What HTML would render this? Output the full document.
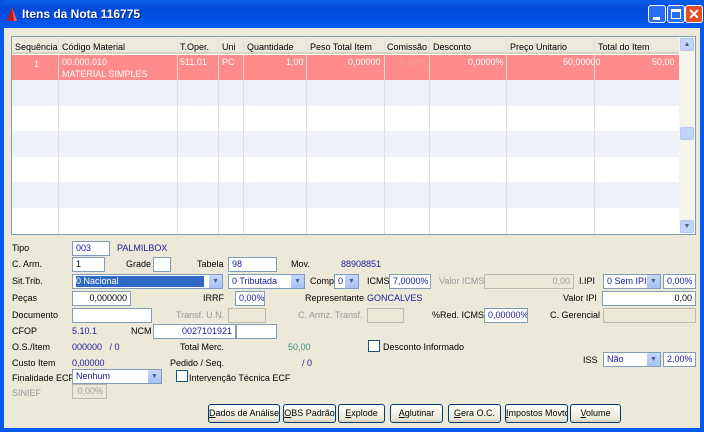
<!DOCTYPE html>
<html><head><meta charset="utf-8"><style>
*{margin:0;padding:0;box-sizing:border-box}
body{width:704px;height:432px;overflow:hidden;background:#0a53d8;font-family:"Liberation Sans",sans-serif;font-size:9px;color:#000}
#win{position:absolute;left:0;top:0;width:704px;height:432px;background:linear-gradient(#0a5fe8,#0048d8 10px,#0058ee 26px);border-radius:7px 7px 0 0}
#title{position:absolute;left:22px;top:7px;color:#fff;font-weight:bold;font-size:12px;text-shadow:1px 1px #0a2a80}
#body{position:absolute;left:4px;top:28px;width:696px;height:400px;background:#ece9d8}
.a{position:absolute;white-space:nowrap}
.in{position:absolute;height:15px;background:#fff;border:1px solid #7f9db9;padding:1px 3px;white-space:nowrap;overflow:hidden;font-size:9px;line-height:11px}
.dis{background:#ebe8d6;border-color:#bdbab0;color:#a0a0a0}
.r{text-align:right}
.bl{color:#1a1a9a}
.sel .ar{position:absolute;right:0;top:0;width:14px;height:13px;background:linear-gradient(#c6d6fb,#a9c1f6);border-left:1px solid #fff;color:#4d6185;font-size:7px;text-align:center;line-height:13px}
.btn{position:absolute;top:404px;height:19px;border:1px solid #003c74;border-radius:3px;background:linear-gradient(#fff,#ece9d8 80%,#d6d0c0);text-align:center;line-height:17px;font-size:9px;white-space:nowrap;overflow:hidden}
.cb{position:absolute;width:12px;height:12px;border:1px solid #1c5180;background:#fff}
.g{color:#999}
</style></head><body>
<div id="win">
<svg style="position:absolute;left:5px;top:6px" width="14" height="16"><path d="M2 15 L7 1 L12 15 Z" fill="#c8101a"/><path d="M7 1 L12 15 L9 15Z" fill="#f46060"/></svg>
<div id="title">Itens da Nota 116775</div>
<div style="position:absolute;left:648px;top:5px;width:18px;height:18px;border:1px solid #fff;border-radius:3px;background:#2a6ef0"><div style="position:absolute;left:4px;top:11px;width:7px;height:3px;background:#fff"></div></div>
<div style="position:absolute;left:667px;top:5px;width:18px;height:18px;border:1px solid #fff;border-radius:3px;background:#2a6ef0"><div style="position:absolute;left:3px;top:3px;width:10px;height:10px;border:1px solid #fff;border-top-width:3px"></div></div>
<div style="position:absolute;left:685px;top:5px;width:18px;height:18px;border:1px solid #fff;border-radius:3px;background:#e0502a;color:#fff;font-weight:bold;font-size:14px;text-align:center;line-height:16px">✕</div>
</div>
<div id="body"></div>
<div style="position:absolute;left:11px;top:36px;width:685px;height:199px;border:1px solid #7f9db9;background:#fff"></div>
<div style="position:absolute;left:12px;top:37px;width:667px;height:17px;background:#ebeadb;border-bottom:2px solid #d6d2c2"></div>
<div style="position:absolute;left:12px;top:55px;width:667px;height:25px;background:#ff8a8a"></div>
<div style="position:absolute;left:12px;top:80px;width:667px;height:26px;background:#eef1fa"></div>
<div style="position:absolute;left:12px;top:131px;width:667px;height:26px;background:#eef1fa"></div>
<div style="position:absolute;left:12px;top:182px;width:667px;height:26px;background:#eef1fa"></div>
<svg style="position:absolute;left:0;top:0" width="704" height="240"><g stroke="#e0dfd6">
<line x1="58.5" y1="38" x2="58.5" y2="234"/><line x1="177.5" y1="38" x2="177.5" y2="234"/><line x1="218.5" y1="38" x2="218.5" y2="234"/><line x1="243.5" y1="38" x2="243.5" y2="234"/><line x1="306.5" y1="38" x2="306.5" y2="234"/><line x1="384.5" y1="38" x2="384.5" y2="234"/><line x1="429.5" y1="38" x2="429.5" y2="234"/><line x1="506.5" y1="38" x2="506.5" y2="234"/><line x1="594.5" y1="38" x2="594.5" y2="234"/></g></svg>
<div class="a" style="left:15px;top:42px">Sequência</div><div class="a" style="left:62px;top:42px">Código Material</div><div class="a" style="left:180px;top:42px">T.Oper.</div><div class="a" style="left:222px;top:42px">Uni</div><div class="a" style="left:247px;top:42px">Quantidade</div><div class="a" style="left:310px;top:42px">Peso Total Item</div><div class="a" style="left:387px;top:42px">Comissão</div><div class="a" style="left:433px;top:42px">Desconto</div><div class="a" style="left:510px;top:42px">Preço Unitario</div><div class="a" style="left:598px;top:42px">Total do Item</div>
<div style="color:#fff">
<div class="a" style="left:34px;top:59px">1</div><div class="a" style="left:62px;top:57px">00.000.010</div><div class="a" style="left:62px;top:69px">MATERIAL SIMPLES</div><div class="a" style="left:180px;top:57px">511.01</div><div class="a" style="left:222px;top:57px">PC</div><div class="a" style="left:286px;top:57px">1,00</div><div class="a" style="left:348px;top:57px">0,00000</div><div class="a" style="left:400px;top:57px;color:#f0a0a0">0,00%</div><div class="a" style="left:468px;top:57px">0,0000%</div><div class="a" style="left:563px;top:57px">50,00000</div><div class="a" style="left:652px;top:57px">50,00</div></div>
<div style="position:absolute;left:679px;top:37px;width:16px;height:197px;background:#f5f4ef"></div>
<div style="position:absolute;left:680px;top:38px;width:14px;height:13px;background:#c1d3fb;border:1px solid #b4c8f2;border-radius:2px;color:#4d6185;font-size:7px;text-align:center;line-height:11px">▲</div>
<div style="position:absolute;left:680px;top:127px;width:14px;height:13px;background:#c1d3fb;border:1px solid #b4c8f2;border-radius:2px"></div>
<div style="position:absolute;left:680px;top:220px;width:14px;height:13px;background:#c1d3fb;border:1px solid #b4c8f2;border-radius:2px;color:#4d6185;font-size:7px;text-align:center;line-height:11px">▼</div>
<div class="a" style="left:12px;top:243px">Tipo</div><div class="in bl" style="left:72px;top:241px;width:38px">003</div><div class="a bl" style="left:117px;top:243px">PALMILBOX</div>
<div class="a" style="left:12px;top:259px">C. Arm.</div><div class="in" style="left:72px;top:257px;width:33px">1</div><div class="a" style="left:126px;top:259px">Grade</div><div class="in" style="left:153px;top:257px;width:18px"></div><div class="a" style="left:197px;top:259px">Tabela</div><div class="in bl" style="left:228px;top:257px;width:49px">98</div><div class="a" style="left:291px;top:259px">Mov.</div><div class="a bl" style="left:341px;top:259px">88908851</div>
<div class="a" style="left:12px;top:276px">Sit.Trib.</div>
<div class="in sel" style="left:72px;top:274px;width:151px"><span style="background:#316ac5;color:#fff;display:inline-block;width:128px">0 Nacional</span><div class="ar">▼</div></div>
<div class="in sel bl" style="left:228px;top:274px;width:77px">0 Tributada<div class="ar">▼</div></div>
<div class="a" style="left:310px;top:276px">Compl</div><div class="in sel bl" style="left:334px;top:274px;width:25px">0<div class="ar">▼</div></div>
<div class="a" style="left:367px;top:276px">ICMS</div><div class="in bl" style="left:389px;top:274px;width:42px">7,0000%</div>
<div class="a g" style="left:439px;top:276px">Valor ICMS</div><div class="in dis r" style="left:484px;top:274px;width:90px">0,00</div>
<div class="a" style="left:579px;top:276px">I.IPI</div><div class="in sel bl" style="left:603px;top:274px;width:58px">0 Sem IPI<div class="ar">▼</div></div><div class="in bl r" style="left:663px;top:274px;width:33px">0,00%</div>
<div class="a" style="left:12px;top:293px">Peças</div><div class="in r" style="left:72px;top:291px;width:59px">0,000000</div><div class="a" style="left:203px;top:293px">IRRF</div><div class="in bl" style="left:235px;top:291px;width:30px">0,00%</div><div class="a" style="left:305px;top:293px">Representante</div><div class="a bl" style="left:367px;top:293px">GONCALVES</div><div class="a" style="left:563px;top:293px">Valor IPI</div><div class="in r" style="left:602px;top:291px;width:94px">0,00</div>
<div class="a" style="left:12px;top:310px">Documento</div><div class="in" style="left:72px;top:308px;width:80px"></div><div class="a g" style="left:176px;top:310px">Transf. U.N.</div><div class="in dis" style="left:228px;top:308px;width:38px"></div><div class="a g" style="left:298px;top:310px">C. Armz. Transf.</div><div class="in dis" style="left:367px;top:308px;width:37px"></div><div class="a" style="left:432px;top:310px">%Red. ICMS</div><div class="in bl" style="left:484px;top:308px;width:44px">0,00000%</div><div class="a" style="left:550px;top:310px">C. Gerencial</div><div class="in dis" style="left:603px;top:308px;width:93px"></div>
<div class="a" style="left:12px;top:326px">CFOP</div><div class="a bl" style="left:72px;top:326px">5.10.1</div><div class="a" style="left:131px;top:326px">NCM</div><div class="in bl r" style="left:153px;top:324px;width:83px">0027101921</div><div class="in" style="left:236px;top:324px;width:41px"></div>
<div class="a" style="left:12px;top:342px">O.S./Item</div><div class="a bl" style="left:72px;top:342px">000000&nbsp;&nbsp;&nbsp;/ 0</div><div class="a" style="left:180px;top:342px">Total Merc.</div><div class="a" style="left:288px;top:342px;color:#3a8a8a">50,00</div><div class="cb" style="left:368px;top:340px"></div><div class="a" style="left:383px;top:342px">Desconto Informado</div>
<div class="a" style="left:12px;top:358px">Custo Item</div><div class="a bl" style="left:72px;top:358px">0,00000</div><div class="a" style="left:170px;top:358px">Pedido / Seq.</div><div class="a bl" style="left:302px;top:358px">/ 0</div><div class="a" style="left:583px;top:355px">ISS</div><div class="in sel bl" style="left:603px;top:352px;width:58px">Não<div class="ar">▼</div></div><div class="in bl r" style="left:663px;top:352px;width:33px">2,00%</div>
<div class="a" style="left:12px;top:373px">Finalidade ECF</div><div class="in sel bl" style="left:72px;top:369px;width:90px">Nenhum<div class="ar">▼</div></div><div class="cb" style="left:176px;top:370px"></div><div class="a" style="left:189px;top:373px">Intervenção Técnica ECF</div>
<div class="a g" style="left:12px;top:388px">SINIEF</div><div class="in dis r" style="left:72px;top:384px;width:35px">0,00%</div>
<div class="btn" style="left:208px;width:72px"><u>D</u>ados de Análise</div>
<div class="btn" style="left:283px;width:53px"><u>O</u>BS Padrão</div>
<div class="btn" style="left:338px;width:47px"><u>E</u>xplode</div>
<div class="btn" style="left:390px;width:53px"><u>A</u>glutinar</div>
<div class="btn" style="left:448px;width:53px"><u>G</u>era O.C.</div>
<div class="btn" style="left:505px;width:63px"><u>I</u>mpostos Movto</div>
<div class="btn" style="left:570px;width:51px"><u>V</u>olume</div>
</body></html>
